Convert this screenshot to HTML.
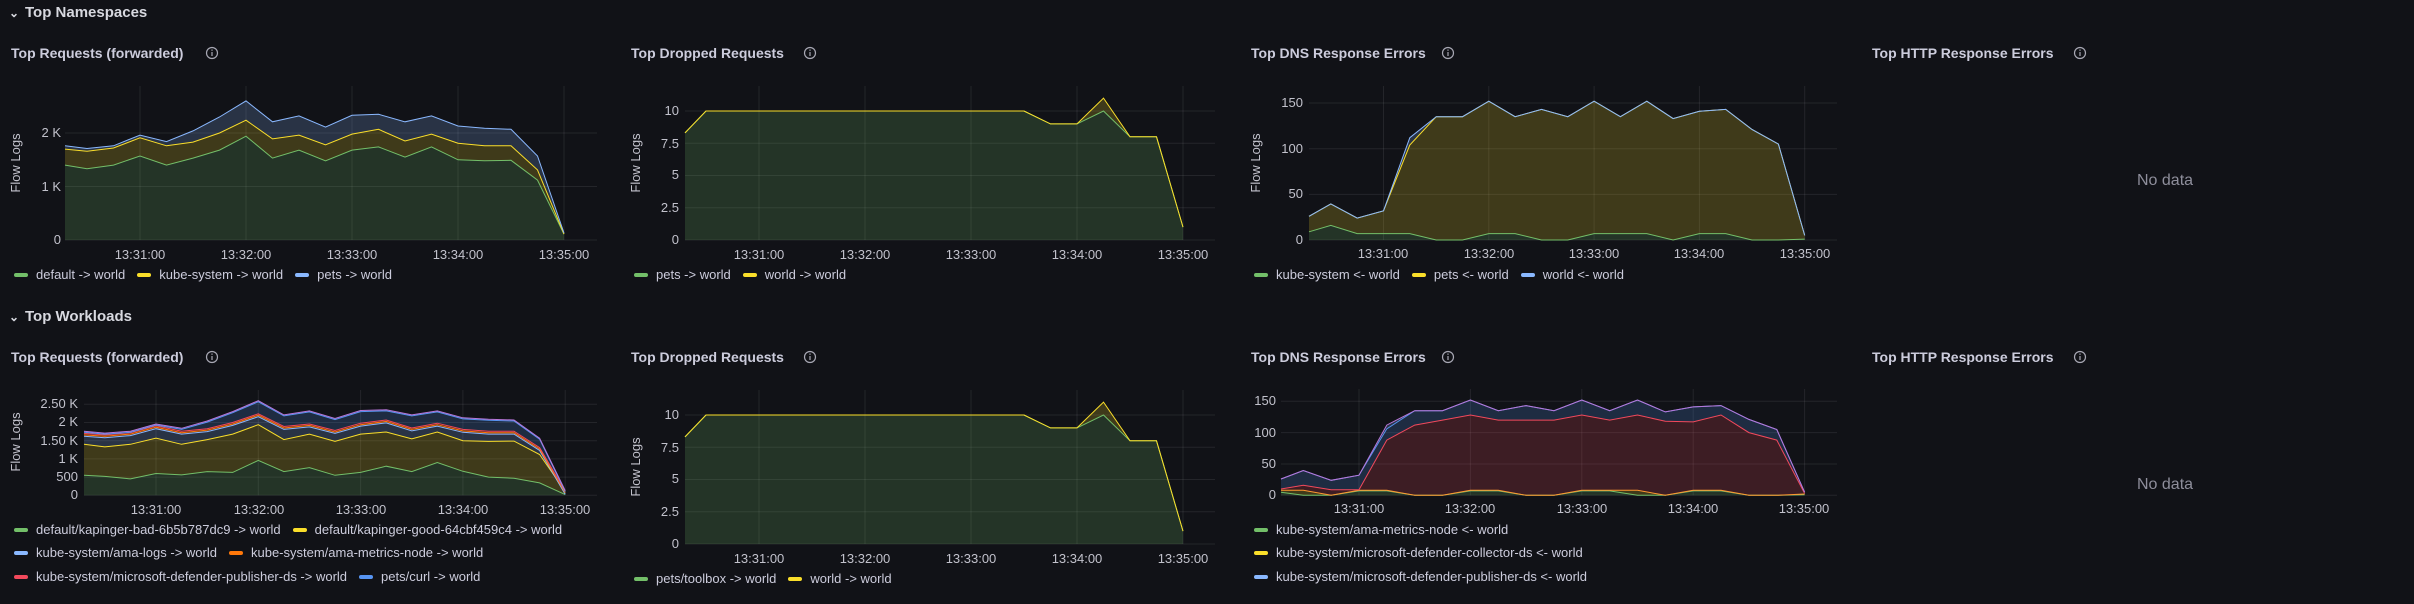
<!DOCTYPE html>
<html><head><meta charset="utf-8">
<style>
html,body{margin:0;padding:0;background:#111217;}
body{width:2414px;height:604px;position:relative;overflow:hidden;font-family:"Liberation Sans",sans-serif;color:#ccccdc;}
.a{position:absolute;white-space:nowrap;}
.h{font-size:15px;font-weight:bold;color:#d8d9e0;line-height:18px;}
.t{font-size:14px;font-weight:bold;color:#ccccdc;line-height:16px;}
.yl{font-size:13px;color:#c2c2cc;line-height:14px;text-align:right;width:60px;}
.xl{font-size:13px;color:#c2c2cc;line-height:14px;width:80px;text-align:center;}
.fl{font-size:13px;color:#c2c2cc;line-height:14px;transform:rotate(-90deg);transform-origin:center;width:80px;text-align:center;}
.lg{font-size:13px;color:#ccccdc;line-height:16px;display:flex;align-items:center;}
.lg i{display:inline-block;width:14px;height:4px;border-radius:2px;margin-right:8px;}
.lg span{margin-right:12px;display:flex;align-items:center;}
.nd{font-size:16px;color:#8e8e9b;line-height:18px;}
svg{position:absolute;left:0;top:0;}
</style></head><body>
<svg id="s" width="2414" height="604" viewBox="0 0 2414 604"></svg>

<!-- headings -->
<div class="a h" style="left:9px;top:4px;font-size:12px;">&#8964;</div>
<div class="a h" style="left:25px;top:4px;">Top Namespaces</div>
<div class="a h" style="left:9px;top:308px;font-size:12px;">&#8964;</div>
<div class="a h" style="left:25px;top:308px;">Top Workloads</div>

<!-- titles top -->
<div class="a t" style="left:11px;top:45px;">Top Requests (forwarded)</div>
<div class="a t" style="left:631px;top:45px;">Top Dropped Requests</div>
<div class="a t" style="left:1251px;top:45px;">Top DNS Response Errors</div>
<div class="a t" style="left:1872px;top:45px;">Top HTTP Response Errors</div>
<!-- titles bottom -->
<div class="a t" style="left:11px;top:349px;">Top Requests (forwarded)</div>
<div class="a t" style="left:631px;top:349px;">Top Dropped Requests</div>
<div class="a t" style="left:1251px;top:349px;">Top DNS Response Errors</div>
<div class="a t" style="left:1872px;top:349px;">Top HTTP Response Errors</div>

<!-- No data -->
<div class="a nd" style="left:2137px;top:172px;">No data</div>
<div class="a nd" style="left:2137px;top:476px;">No data</div>

<!-- Flow Logs -->
<div class="a fl" style="left:-24px;top:156px;">Flow Logs</div>
<div class="a fl" style="left:596px;top:156px;">Flow Logs</div>
<div class="a fl" style="left:1216px;top:156px;">Flow Logs</div>
<div class="a fl" style="left:-24px;top:435px;">Flow Logs</div>
<div class="a fl" style="left:596px;top:460px;">Flow Logs</div>

<div class="a yl" style="left:1px;top:126px;">2 K</div>
<div class="a yl" style="left:1px;top:180px;">1 K</div>
<div class="a yl" style="left:1px;top:233px;">0</div>
<div class="a yl" style="left:619px;top:104px;">10</div>
<div class="a yl" style="left:619px;top:137px;">7.5</div>
<div class="a yl" style="left:619px;top:168px;">5</div>
<div class="a yl" style="left:619px;top:201px;">2.5</div>
<div class="a yl" style="left:619px;top:233px;">0</div>
<div class="a yl" style="left:1243px;top:96px;">150</div>
<div class="a yl" style="left:1243px;top:142px;">100</div>
<div class="a yl" style="left:1243px;top:187px;">50</div>
<div class="a yl" style="left:1243px;top:233px;">0</div>
<div class="a yl" style="left:18px;top:397px;">2.50 K</div>
<div class="a yl" style="left:18px;top:415px;">2 K</div>
<div class="a yl" style="left:18px;top:434px;">1.50 K</div>
<div class="a yl" style="left:18px;top:452px;">1 K</div>
<div class="a yl" style="left:18px;top:470px;">500</div>
<div class="a yl" style="left:18px;top:488px;">0</div>
<div class="a yl" style="left:619px;top:408px;">10</div>
<div class="a yl" style="left:619px;top:441px;">7.5</div>
<div class="a yl" style="left:619px;top:472px;">5</div>
<div class="a yl" style="left:619px;top:505px;">2.5</div>
<div class="a yl" style="left:619px;top:537px;">0</div>
<div class="a yl" style="left:1216px;top:394px;">150</div>
<div class="a yl" style="left:1216px;top:426px;">100</div>
<div class="a yl" style="left:1216px;top:457px;">50</div>
<div class="a yl" style="left:1216px;top:488px;">0</div>

<div class="a xl" style="left:100px;top:248px;">13:31:00</div>
<div class="a xl" style="left:206px;top:248px;">13:32:00</div>
<div class="a xl" style="left:312px;top:248px;">13:33:00</div>
<div class="a xl" style="left:418px;top:248px;">13:34:00</div>
<div class="a xl" style="left:524px;top:248px;">13:35:00</div>

<div class="a xl" style="left:719px;top:248px;">13:31:00</div>
<div class="a xl" style="left:825px;top:248px;">13:32:00</div>
<div class="a xl" style="left:931px;top:248px;">13:33:00</div>
<div class="a xl" style="left:1037px;top:248px;">13:34:00</div>
<div class="a xl" style="left:1143px;top:248px;">13:35:00</div>

<div class="a xl" style="left:1343px;top:247px;">13:31:00</div>
<div class="a xl" style="left:1449px;top:247px;">13:32:00</div>
<div class="a xl" style="left:1554px;top:247px;">13:33:00</div>
<div class="a xl" style="left:1659px;top:247px;">13:34:00</div>
<div class="a xl" style="left:1765px;top:247px;">13:35:00</div>

<div class="a xl" style="left:116px;top:503px;">13:31:00</div>
<div class="a xl" style="left:219px;top:503px;">13:32:00</div>
<div class="a xl" style="left:321px;top:503px;">13:33:00</div>
<div class="a xl" style="left:423px;top:503px;">13:34:00</div>
<div class="a xl" style="left:525px;top:503px;">13:35:00</div>

<div class="a xl" style="left:719px;top:552px;">13:31:00</div>
<div class="a xl" style="left:825px;top:552px;">13:32:00</div>
<div class="a xl" style="left:931px;top:552px;">13:33:00</div>
<div class="a xl" style="left:1037px;top:552px;">13:34:00</div>
<div class="a xl" style="left:1143px;top:552px;">13:35:00</div>

<div class="a xl" style="left:1319px;top:502px;">13:31:00</div>
<div class="a xl" style="left:1430px;top:502px;">13:32:00</div>
<div class="a xl" style="left:1542px;top:502px;">13:33:00</div>
<div class="a xl" style="left:1653px;top:502px;">13:34:00</div>
<div class="a xl" style="left:1764px;top:502px;">13:35:00</div>

<div class="a lg" style="left:14px;top:267px;"><span><i style="background:#73BF69"></i>default -&gt; world</span><span><i style="background:#FADE2A"></i>kube-system -&gt; world</span><span><i style="background:#8AB8FF"></i>pets -&gt; world</span></div>
<div class="a lg" style="left:634px;top:267px;"><span><i style="background:#73BF69"></i>pets -&gt; world</span><span><i style="background:#FADE2A"></i>world -&gt; world</span></div>
<div class="a lg" style="left:1254px;top:267px;"><span><i style="background:#73BF69"></i>kube-system &lt;- world</span><span><i style="background:#FADE2A"></i>pets &lt;- world</span><span><i style="background:#8AB8FF"></i>world &lt;- world</span></div>
<div class="a lg" style="left:14px;top:522px;"><span><i style="background:#73BF69"></i>default/kapinger-bad-6b5b787dc9 -&gt; world</span><span><i style="background:#FADE2A"></i>default/kapinger-good-64cbf459c4 -&gt; world</span></div>
<div class="a lg" style="left:14px;top:545px;"><span><i style="background:#8AB8FF"></i>kube-system/ama-logs -&gt; world</span><span><i style="background:#FF780A"></i>kube-system/ama-metrics-node -&gt; world</span></div>
<div class="a lg" style="left:14px;top:569px;"><span><i style="background:#F2495C"></i>kube-system/microsoft-defender-publisher-ds -&gt; world</span><span><i style="background:#5794F2"></i>pets/curl -&gt; world</span></div>
<div class="a lg" style="left:634px;top:571px;"><span><i style="background:#73BF69"></i>pets/toolbox -&gt; world</span><span><i style="background:#FADE2A"></i>world -&gt; world</span></div>
<div class="a lg" style="left:1254px;top:522px;"><span><i style="background:#73BF69"></i>kube-system/ama-metrics-node &lt;- world</span></div>
<div class="a lg" style="left:1254px;top:545px;"><span><i style="background:#FADE2A"></i>kube-system/microsoft-defender-collector-ds &lt;- world</span></div>
<div class="a lg" style="left:1254px;top:569px;"><span><i style="background:#8AB8FF"></i>kube-system/microsoft-defender-publisher-ds &lt;- world</span></div>

<script>
var S=document.getElementById('s'),NS='http://www.w3.org/2000/svg';
function el(n,a){var e=document.createElementNS(NS,n);for(var k in a)e.setAttribute(k,a[k]);S.appendChild(e);return e;}
function info(x,y){el('circle',{cx:x,cy:y,r:5.5,fill:'none',stroke:'#a8a8b4','stroke-width':1.2});el('rect',{x:x-0.6,y:y-1,width:1.2,height:4,fill:'#a8a8b4'});el('rect',{x:x-0.6,y:y-3.5,width:1.2,height:1.3,fill:'#a8a8b4'});}
[[212,53],[810,53],[1448,53],[2080,53],[212,357],[810,357],[1448,357],[2080,357]].forEach(function(p){info(p[0],p[1]);});
function chart(p,ticks,series){
  var X=function(i){return i==0?p.left:p.x31+(i-3)*p.pm/4;};
  var Y=function(v){return p.y0-v*p.k;};
  ticks.forEach(function(t){el('line',{x1:p.left,x2:p.right,y1:Y(t),y2:Y(t),stroke:'rgba(204,204,220,0.1)','stroke-width':1});});
  for(var m=0;m<5;m++){var x=p.x31+m*p.pm;el('line',{x1:x,x2:x,y1:p.top,y2:p.y0,stroke:'rgba(204,204,220,0.1)','stroke-width':1});}
  var prev=null;
  series.forEach(function(s){
    var up=s.v,n=up.length,d='M';
    for(var i=0;i<n;i++)d+=X(i).toFixed(1)+','+Y(up[i]).toFixed(1)+' ';
    for(var i=n-1;i>=0;i--)d+='L'+X(i).toFixed(1)+','+Y(prev?prev[i]:0).toFixed(1)+' ';
    el('path',{d:d+'Z',fill:s.c,'fill-opacity':0.2,stroke:'none'});
    prev=up;
  });
  series.forEach(function(s){
    var pts='';for(var i=0;i<s.v.length;i++)pts+=X(i).toFixed(1)+','+Y(s.v[i]).toFixed(1)+' ';
    el('polyline',{points:pts,fill:'none',stroke:s.l||s.c,'stroke-width':1});
  });
}
var G=[1.4,1.33,1.4,1.57,1.4,1.53,1.68,1.94,1.53,1.68,1.48,1.68,1.74,1.55,1.74,1.5,1.48,1.49,1.12,0.11];
var Yl=[1.70,1.66,1.72,1.91,1.76,1.83,2.0,2.24,1.89,1.96,1.78,1.98,2.07,1.85,1.98,1.81,1.76,1.76,1.31,0.11];
var B=[1.76,1.71,1.76,1.96,1.84,2.04,2.30,2.60,2.21,2.32,2.11,2.33,2.35,2.21,2.32,2.13,2.09,2.07,1.57,0.13];
chart({left:65,x31:140,pm:106,right:597,y0:240,k:53.5,top:86},[0,1,2],
 [{v:G,c:'#73BF69'},{v:Yl,c:'#FADE2A'},{v:B,c:'#8AB8FF'}]);
var G2=[0.55,0.52,0.45,0.6,0.56,0.65,0.63,0.96,0.65,0.76,0.55,0.63,0.8,0.65,0.9,0.66,0.5,0.47,0.34,0.02];
function add(a,d){return a.map(function(v){return Math.max(0,v+d);});}
chart({left:84,x31:156,pm:102.3,right:597,y0:495.3,k:36.4,top:390},[0,0.5,1,1.5,2,2.5],
 [{v:G2,c:'#73BF69'},{v:G,c:'#FADE2A'},{v:add(Yl,-0.08),c:'#8AB8FF'},{v:add(Yl,-0.04),c:'#FF780A'},{v:Yl,c:'#F2495C'},{v:add(B,-0.03),c:'#5794F2'},{v:B,c:'#8AB8FF',l:'#B877D9'}]);
var W=[8.3,10,10,10,10,10,10,10,10,10,10,10,10,10,9,9,11,8,8,1];
var P=W.slice();P[16]=10;
chart({left:685,x31:759,pm:106,right:1215,y0:240,k:12.9,top:86},[0,2.5,5,7.5,10],
 [{v:P,c:'#73BF69'},{v:W,c:'#FADE2A'}]);
chart({left:685,x31:759,pm:106,right:1215,y0:544,k:12.9,top:390},[0,2.5,5,7.5,10],
 [{v:P,c:'#73BF69'},{v:W,c:'#FADE2A'}]);
var G3=[9,16,7,7,7,0,0,7,7,0,0,7,7,7,0,7,7,0,0,1];
var B3=[26,39.5,24,32,112,135,135,152,135,143,135,152,135,152,133,141,143,121,105,5];
var Y3=B3.slice();Y3[4]=104;
chart({left:1309,x31:1383.5,pm:105.3,right:1837,y0:240,k:0.913,top:86},[0,50,100,150],
 [{v:G3,c:'#73BF69'},{v:Y3,c:'#FADE2A'},{v:B3,c:'#8AB8FF'}]);
var Gr=[5,0,0,7,7,0,0,7,7,0,0,7,7,0,0,7,7,0,0,1];
var Or=[8,8,0,8,8,0,0,8,8,0,0,8,8,8,0,8,8,0,0,2];
var Rd=[10,16,9,9,88,112,120,128,120,120,120,128,120,128,118,117,128,100,88,3];
var Bl=B3.slice();Bl[4]=106;
chart({left:1281,x31:1359,pm:111.4,right:1837,y0:495.3,k:0.627,top:389},[0,50,100,150],
 [{v:Gr,c:'#73BF69'},{v:Or,c:'#FADE2A',l:'#FF9830'},{v:Rd,c:'#F2495C'},{v:Bl,c:'#5794F2'},{v:B3,c:'#8AB8FF',l:'#B877D9'}]);
</script>
</body></html>
